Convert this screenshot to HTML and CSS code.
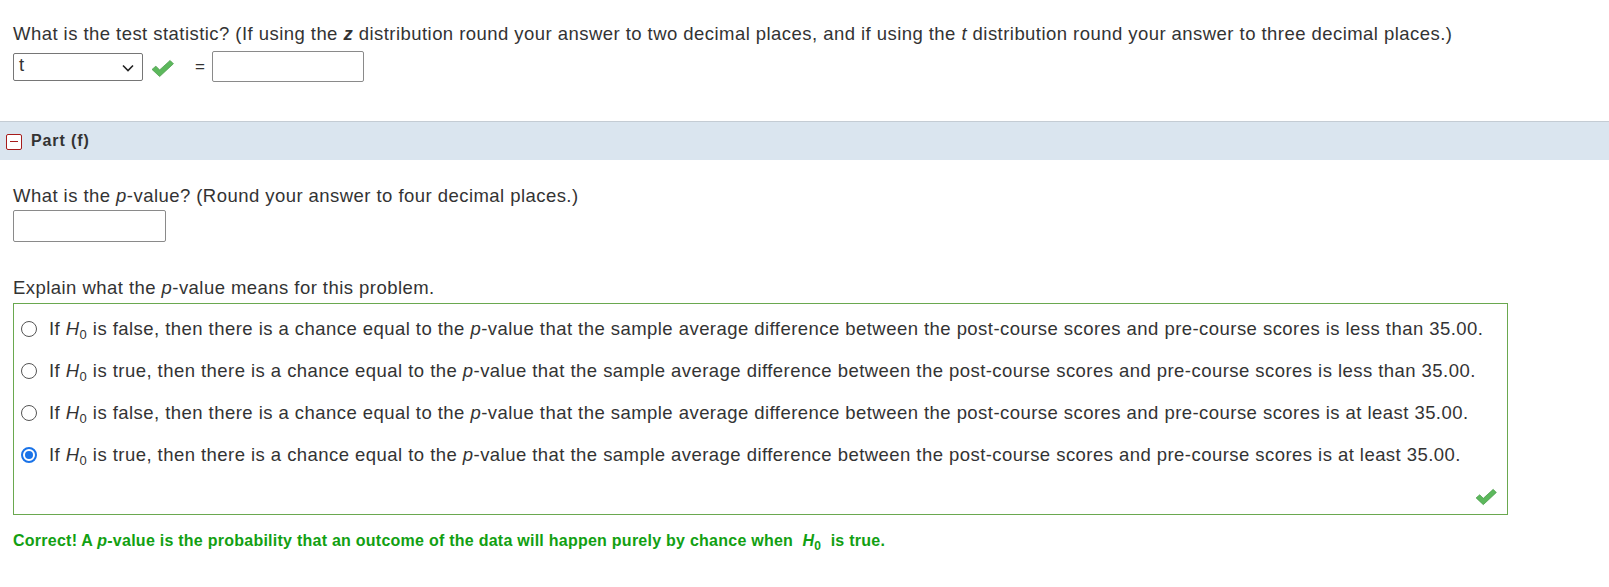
FILE: index.html
```html
<!DOCTYPE html>
<html>
<head>
<meta charset="utf-8">
<link rel="stylesheet" href="styles.css">
</head>
<body>
<div class="page">
  <section class="part-body first">
    <p class="q">What is the test statistic? (If using the <b class="iz">z</b> distribution round your answer to two decimal places, and if using the <i>t</i> distribution round your answer to three decimal places.)</p>
    <div class="row">
      <div class="select"><span>t</span>
        <svg class="chev" width="12" height="8" viewBox="0 0 12 8"><path d="M1 1.5 L6 6.5 L11 1.5" fill="none" stroke="#222" stroke-width="1.6"/></svg>
      </div>
      <svg class="check" width="25" height="19" viewBox="0 0 26 20"><path d="M2 11 L6 7.5 L10 11.5 L21 1.5 L24.5 5 L10 18.5 Z" fill="#5cb85c" stroke="#4a9a4a" stroke-width="0.8" stroke-linejoin="round"/></svg>
      <span class="eq">=</span>
      <div class="input wide"></div>
    </div>
  </section>

  <div class="part-head">
    <span class="minus"></span>
    <span class="ptitle">Part (f)</span>
  </div>

  <section class="part-body second">
    <p class="q">What is the <i>p</i>-value? (Round your answer to four decimal places.)</p>
    <div class="input narrow"></div>

    <p class="q explain">Explain what the <i>p</i>-value means for this problem.</p>
    <div class="choices">
      <label class="opt"><span class="radio"></span><span class="otext">If <i>H</i><sub>0</sub> is false, then there is a chance equal to the <i>p</i>-value that the sample average difference between the post-course scores and pre-course scores is less than 35.00.</span></label>
      <label class="opt"><span class="radio"></span><span class="otext">If <i>H</i><sub>0</sub> is true, then there is a chance equal to the <i>p</i>-value that the sample average difference between the post-course scores and pre-course scores is less than 35.00.</span></label>
      <label class="opt"><span class="radio"></span><span class="otext">If <i>H</i><sub>0</sub> is false, then there is a chance equal to the <i>p</i>-value that the sample average difference between the post-course scores and pre-course scores is at least 35.00.</span></label>
      <label class="opt"><span class="radio on"></span><span class="otext">If <i>H</i><sub>0</sub> is true, then there is a chance equal to the <i>p</i>-value that the sample average difference between the post-course scores and pre-course scores is at least 35.00.</span></label>
      <div class="foot">
        <svg class="check" width="24" height="18" viewBox="0 0 26 20"><path d="M2 11 L6 7.5 L10 11.5 L21 1.5 L24.5 5 L10 18.5 Z" fill="#5cb85c" stroke="#4a9a4a" stroke-width="0.8" stroke-linejoin="round"/></svg>
      </div>
    </div>
    <p class="correct">Correct! A <i>p</i>-value is the probability that an outcome of the data will happen purely by chance when&nbsp; <i>H</i><sub>0</sub>&nbsp; is true.</p>
  </section>
</div>
</body>
</html>
```

FILE: styles.css
```css
html, body {
  margin: 0;
  padding: 0;
  background: #fff;
}
body {
  font-family: "Liberation Sans", Arial, sans-serif;
  font-size: 18.5px;
  letter-spacing: 0.45px;
  color: #333;
}
.part-body {
  padding: 0 13px;
}
.part-body.first {
  padding-top: 23px;
  padding-bottom: 39px;
}
.part-body.second {
  padding-top: 25px;
}
.q {
  margin: 0;
  line-height: 22px;
}
.iz {
  font-weight: bold;
  font-style: italic;
}
.row {
  display: flex;
  align-items: flex-start;
  margin-top: 6px;
  height: 31px;
}
.select {
  width: 130px;
  height: 28px;
  box-sizing: border-box;
  margin-top: 2px;
  border: 1px solid #767676;
  border-radius: 2px;
  display: flex;
  align-items: center;
  justify-content: space-between;
  padding: 0 8px 0 5px;
}
.select span {
  line-height: 20px;
  margin-top: -5px;
}
.chev {
  margin-top: 2px;
}
.row .check {
  margin-left: 7px;
  margin-top: 8px;
}
.eq {
  margin-left: 20px;
  margin-right: 7px;
  font-size: 17px;
  line-height: 31px;
}
.input {
  border: 1px solid #8a8a8a;
  border-radius: 2px;
  background: #fff;
  box-sizing: border-box;
}
.input.wide {
  width: 152px;
  height: 31px;
}
.input.narrow {
  width: 153px;
  height: 32px;
  margin-top: 3px;
}
.part-head {
  height: 39px;
  box-sizing: border-box;
  background: #dae5ef;
  border-top: 1px solid #c4ccd4;
  display: flex;
  align-items: center;
  padding-left: 6px;
}
.minus {
  width: 16px;
  height: 16px;
  box-sizing: border-box;
  margin-top: 2px;
  border: 1.5px solid #a61c1c;
  border-radius: 2px;
  position: relative;
  background: #fff;
}
.minus::after {
  content: "";
  position: absolute;
  left: 3px;
  right: 3px;
  top: 5.5px;
  height: 1.5px;
  background: #a61c1c;
}
.ptitle {
  margin-left: 9px;
  font-weight: bold;
  font-size: 16px;
  letter-spacing: 0.9px;
  color: #333;
}
.explain {
  margin-top: 35px;
}
.choices {
  border: 1px solid #6aa84f;
  margin-top: 4px;
  width: 1495px;
  box-sizing: border-box;
  padding-top: 4px;
}
.opt {
  display: flex;
  align-items: center;
  height: 42px;
  padding-left: 7px;
}
.otext {
  margin-left: 12px;
}
.radio {
  width: 16px;
  height: 16px;
  box-sizing: border-box;
  border: 1px solid #555;
  border-radius: 50%;
  flex: none;
  background: #fff;
  position: relative;
}
.radio.on {
  border: 2px solid #1a73e8;
}
.radio.on::after {
  content: "";
  position: absolute;
  left: 2px;
  top: 2px;
  width: 8px;
  height: 8px;
  border-radius: 50%;
  background: #1a73e8;
}
sub {
  font-size: 13px;
  vertical-align: -4px;
  line-height: 0;
}
.foot {
  display: flex;
  justify-content: flex-end;
  height: 38px;
  box-sizing: border-box;
  padding: 12px 9px 0 0;
}
.correct {
  margin: 15px 0 0 0;
  line-height: 22px;
  font-weight: bold;
  font-size: 16px;
  letter-spacing: 0.25px;
  color: #12a012;
}
.correct sub {
  font-size: 12px;
}
```
